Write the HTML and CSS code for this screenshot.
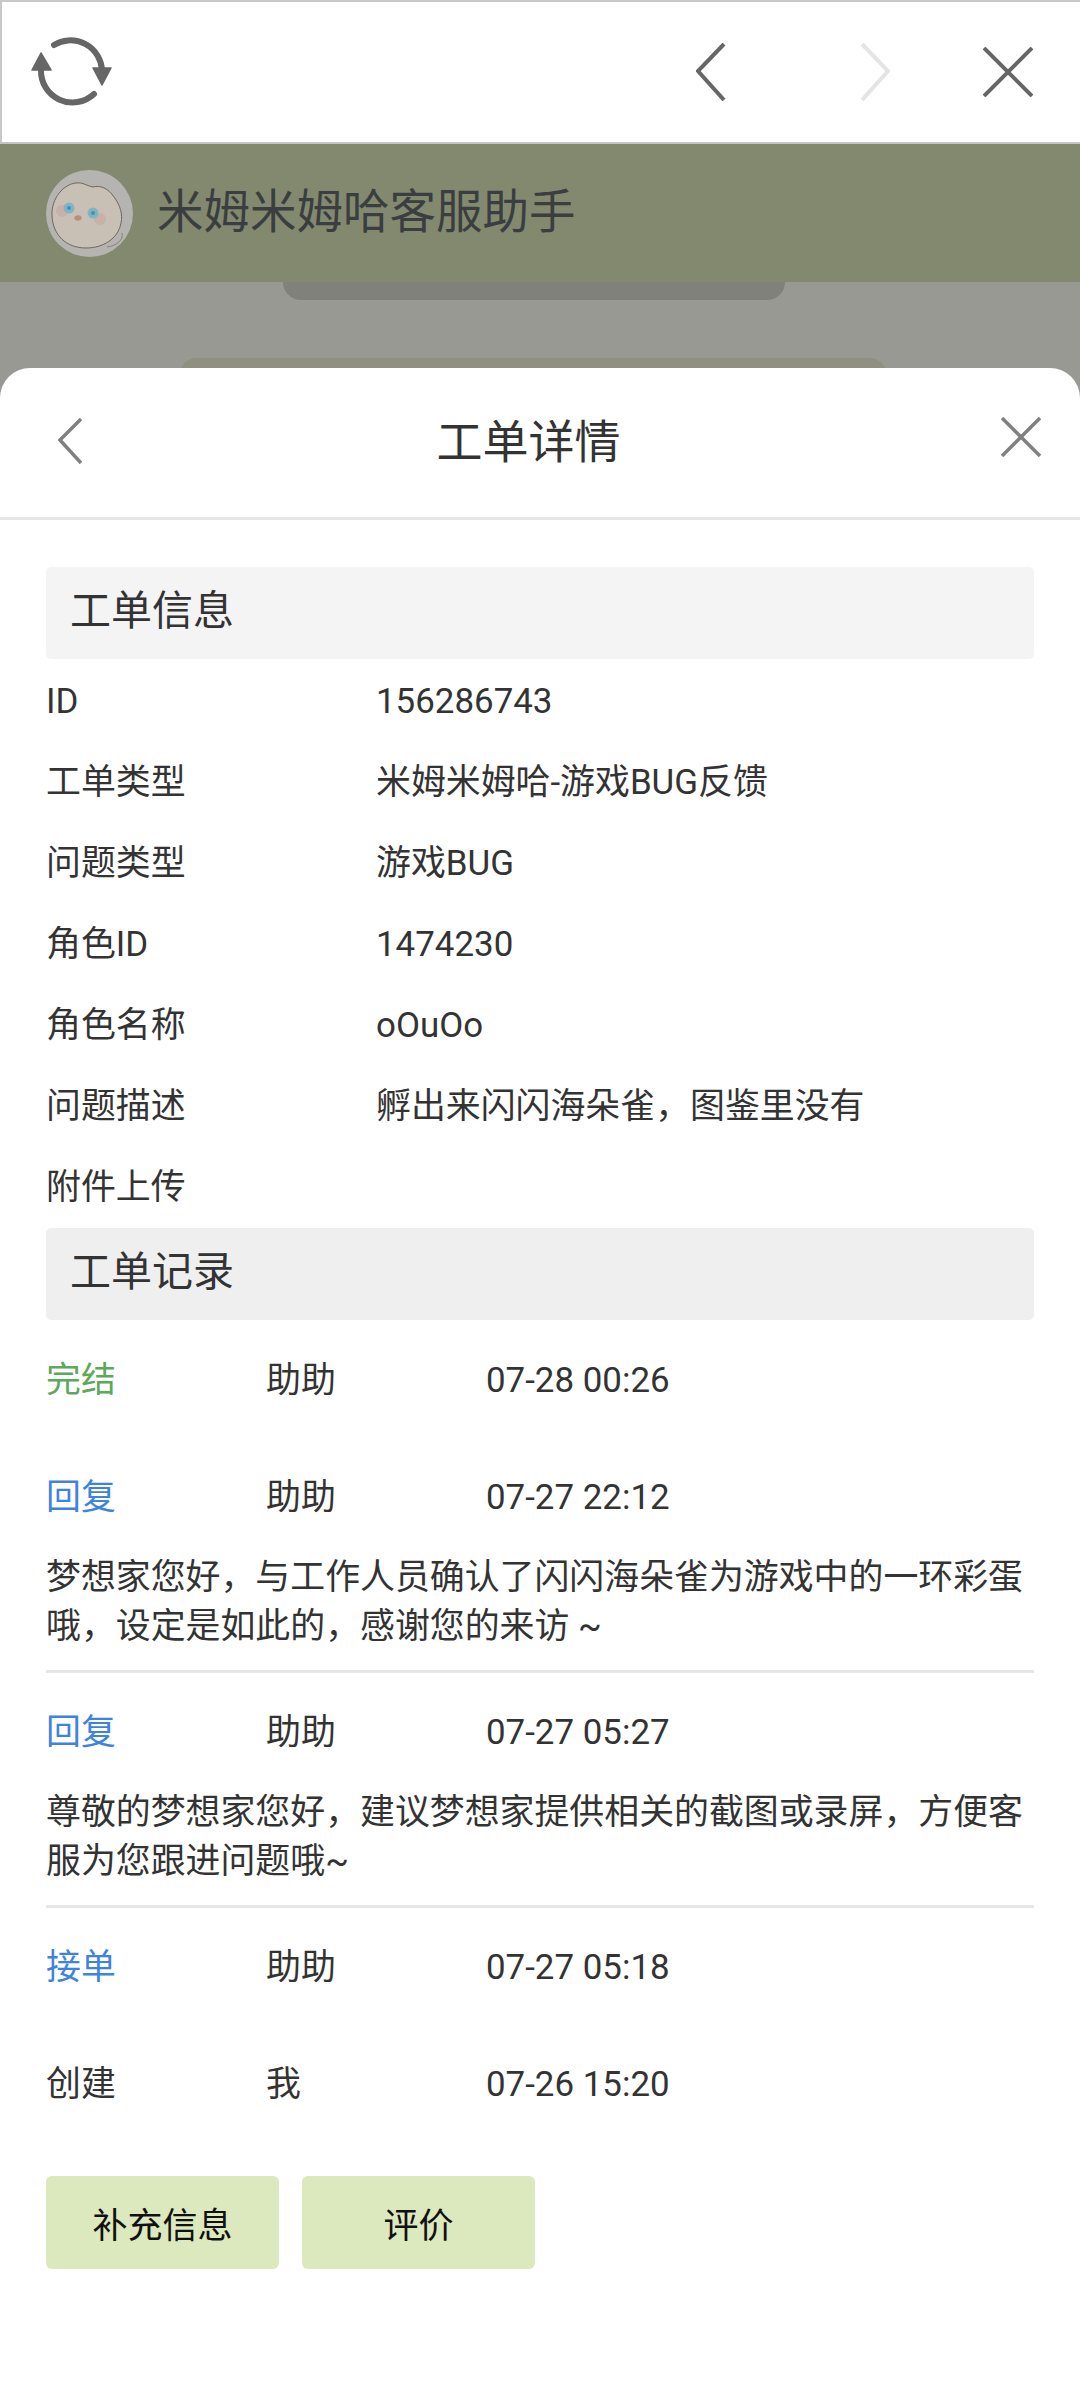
FILE: index.html
```html
<!DOCTYPE html>
<html lang="zh-CN">
<head>
  <meta charset="UTF-8" />
  <meta name="viewport" content="width=device-width, initial-scale=1.0"/>
  <title>工单详情</title>
  <link rel="stylesheet" href="styles.css">
</head>
<body>

<div class="browser-bar">
  <svg class="icon-refresh" width="95" height="90" viewBox="0 0 95 90">
    <path d="M 34 18 A 31.5 31.5 0 0 1 82 43" fill="none" stroke="#666" stroke-width="6" stroke-linecap="round"/>
    <path d="M 74 67 A 31.5 31.5 0 0 1 21 43" fill="none" stroke="#666" stroke-width="6" stroke-linecap="round"/>
    <path d="M 73 41 H 91 L 82 58 Z" fill="#666" stroke="#666" stroke-width="1.5" stroke-linejoin="round"/>
    <path d="M 12 43 H 31 L 21 26 Z" fill="#666" stroke="#666" stroke-width="1.5" stroke-linejoin="round"/>
  </svg>
  <div class="browser-actions">
    <svg class="nav-back" width="30" height="58" viewBox="0 0 30 58"><path d="M 28 1 L 2 28 L 28 57" fill="none" stroke="#666" stroke-width="4"/></svg>
    <svg width="30" height="58" viewBox="0 0 30 58"><path d="M 2 1 L 28 28 L 2 57" fill="none" stroke="#e4e4e4" stroke-width="4"/></svg>
    <svg width="50" height="50" viewBox="0 0 50 50"><path d="M 1 1 L 49 49 M 49 1 L 1 49" fill="none" stroke="#666" stroke-width="4"/></svg>
  </div>
</div>

<div class="behind">
  <div class="chat-head">
    <svg class="avatar" width="87" height="87" viewBox="0 0 87 87">
      <circle cx="43.5" cy="43.5" r="43.5" fill="#b5b4b0"/>
      <path d="M 6 46 C 5 28 18 14 30 13 C 37 12 41 16 47 17 C 54 15 62 18 68 27 C 74 35 77 44 75 53 C 72 69 57 78 40 78 C 20 78 7 65 6 46 Z" fill="#c8c0b5" stroke="#6f6660" stroke-width="1"/>
      <path d="M 61 77 C 70 76 78 70 76 63" fill="none" stroke="#8a7f78" stroke-width="1"/>
      <circle cx="16" cy="41" r="6" fill="#c9b0a8"/>
      <circle cx="54" cy="49" r="6" fill="#c9b0a8"/>
      <circle cx="23" cy="38" r="5.5" fill="#7fb4c6"/>
      <circle cx="47" cy="43" r="5.5" fill="#7fb4c6"/>
      <circle cx="23" cy="38" r="2" fill="#4a90b0"/>
      <circle cx="47" cy="43" r="2" fill="#4a90b0"/>
      <ellipse cx="32" cy="48" rx="3.6" ry="2.8" fill="#c08a7c"/>
    </svg>
    <span class="chat-name">米姆米姆哈客服助手</span>
  </div>
  <div class="backdrop">
    <div class="behind-pill"></div>
    <div class="behind-card"></div>
  </div>

  <div class="sheet">
    <div class="sheet-head">
      <svg class="sheet-back" width="24" height="46" viewBox="0 0 24 46"><path d="M 23 1 L 2 22 L 23 45" fill="none" stroke="#808080" stroke-width="3.5"/></svg>
      <h2 class="sheet-title">工单详情</h2>
      <svg class="sheet-close" width="40" height="40" viewBox="0 0 40 40"><path d="M 1 1 L 39 39 M 39 1 L 1 39" fill="none" stroke="#808080" stroke-width="3.5"/></svg>
    </div>

    <div class="sheet-body">
      <div class="section-title light">工单信息</div>
      <div class="info-row"><span class="info-label">ID</span><span>156286743</span></div>
      <div class="info-row"><span class="info-label">工单类型</span><span>米姆米姆哈-游戏BUG反馈</span></div>
      <div class="info-row"><span class="info-label">问题类型</span><span>游戏BUG</span></div>
      <div class="info-row"><span class="info-label">角色ID</span><span>1474230</span></div>
      <div class="info-row"><span class="info-label">角色名称</span><span>oOuOo</span></div>
      <div class="info-row"><span class="info-label">问题描述</span><span>孵出来闪闪海朵雀，图鉴里没有</span></div>
      <div class="info-row"><span class="info-label">附件上传</span></div>

      <div class="section-title records-title">工单记录</div>

      <div class="record first">
        <div class="record-row"><span class="status green">完结</span><span class="who">助助</span><span>07-28 00:26</span></div>
      </div>
      <div class="record line">
        <div class="record-row"><span class="status blue">回复</span><span class="who">助助</span><span>07-27 22:12</span></div>
        <p class="record-text">梦想家您好，与工作人员确认了闪闪海朵雀为游戏中的一环彩蛋哦，设定是如此的，感谢您的来访 ~</p>
      </div>
      <div class="record line">
        <div class="record-row"><span class="status blue">回复</span><span class="who">助助</span><span>07-27 05:27</span></div>
        <p class="record-text">尊敬的梦想家您好，建议梦想家提供相关的截图或录屏，方便客服为您跟进问题哦~</p>
      </div>
      <div class="record">
        <div class="record-row"><span class="status blue">接单</span><span class="who">助助</span><span>07-27 05:18</span></div>
      </div>
      <div class="record">
        <div class="record-row"><span class="status">创建</span><span class="who">我</span><span>07-26 15:20</span></div>
      </div>

      <div class="buttons">
        <button>补充信息</button>
        <button>评价</button>
      </div>
    </div>
  </div>
</div>

</body>
</html>
```

FILE: styles.css
```css
* {
  box-sizing: border-box;
}
html, body {
  margin: 0;
  padding: 0;
}
body {
  width: 1080px;
  height: 2400px;
  overflow: hidden;
  background: white;
  font-family: Roboto, "Noto Sans CJK SC", sans-serif;
  font-size: 34.9px;
  line-height: 49px;
  color: #333;
}
.browser-bar {
  height: 144px;
  display: flex;
  justify-content: space-between;
  align-items: center;
  padding: 0 47px 0 18px;
  background: white;
  border-top: 2px solid #c8c8c8;
  border-left: 2px solid #c8c8c8;
  border-bottom: 2px solid #c4c4c4;
}
.browser-actions {
  display: flex;
  align-items: center;
  gap: 93px;
}
.nav-back {
  margin-right: 41px;
}
.icon-refresh, .browser-actions svg, .avatar, .sheet-back, .sheet-close {
  display: block;
}
.behind {
  background: #989992;
}
.chat-head {
  height: 138px;
  display: flex;
  align-items: center;
  gap: 24px;
  padding-left: 46px;
  background: #83896f;
}
.chat-name {
  margin-top: -3px;
  font-size: 46.5px;
  line-height: 60px;
  color: #3a3e40;
}
.backdrop {
  height: 86px;
  overflow: hidden;
}
.behind-pill {
  width: 502px;
  height: 18px;
  margin-left: 283px;
  background: #80817a;
  border-radius: 0 0 30px 30px;
}
.behind-card {
  width: 706px;
  height: 20px;
  margin: 58px 0 0 180px;
  background: #8f9080;
  border-radius: 16px 16px 0 0;
}
.sheet {
  height: 2032px;
  background: white;
  border-radius: 30px 30px 0 0;
}
.sheet-head {
  height: 152px;
  display: flex;
  justify-content: space-between;
  align-items: center;
  padding: 0 39px 4px 58px;
  border-bottom: 3px solid #e6e6e6;
}
.sheet-close {
  margin-top: -8px;
}
.sheet-title {
  margin: 3px 26px 0 0;
  font-size: 46px;
  line-height: 60px;
  font-weight: normal;
  color: #333;
}
.sheet-body {
  padding: 47px 46px 0;
}
.section-title {
  height: 92px;
  padding-left: 24px;
  font-size: 41px;
  line-height: 88px;
  background: #efefef;
  border-radius: 5px;
}
.section-title.light {
  background: #f4f4f4;
}
.records-title {
  margin-top: 2px;
}
.info-row, .record-row {
  display: flex;
  height: 81px;
  padding-top: 3px;
  align-items: center;
}
.info-label {
  width: 330px;
}
.status, .who {
  width: 220px;
}
.green {
  color: #5ca85c;
}
.blue {
  color: #3f83e0;
}
.record {
  margin-bottom: 36px;
}
.record.first {
  margin-top: 18px;
}
.record.line {
  margin-bottom: 17px;
  padding-bottom: 19px;
  border-bottom: 3px solid #e6e6e6;
}
.record-text {
  margin: 17px 0 0;
}
.buttons {
  display: flex;
  gap: 23px;
  margin-top: 53px;
}
.buttons button {
  width: 233px;
  height: 93px;
  padding: 0;
  font-family: inherit;
  font-size: 35px;
  color: #111;
  background: #dce8be;
  border: none;
  border-radius: 6px;
}
```
